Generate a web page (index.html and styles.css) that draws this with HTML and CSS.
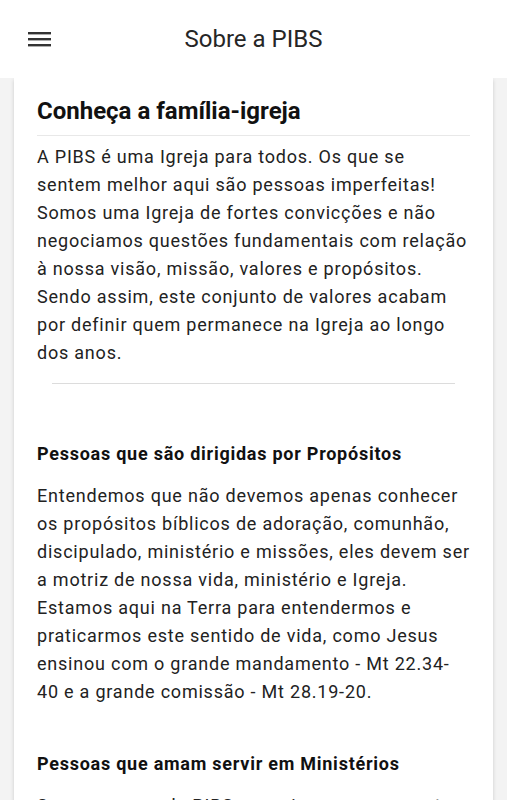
FILE: index.html
```html
<!DOCTYPE html>
<html lang="pt-BR">
<head>
    <meta charset="UTF-8">
    <meta name="viewport" content="width=device-width, initial-scale=1.0">
    <title>Sobre a PIBS</title>
    <link rel="stylesheet" href="styles.css">
</head>
<body>
    <!-- Top bar -->
    <header class="topbar">
        <button class="menu-btn" aria-label="Menu">
            <svg width="24" height="16" viewBox="0 0 24 16">
                <rect x="0" y="0" width="23" height="2.4" fill="#333"/>
                <rect x="0" y="6" width="23" height="2.4" fill="#333"/>
                <rect x="0" y="12" width="23" height="2.4" fill="#333"/>
            </svg>
        </button>
        <h1 class="topbar-title">Sobre a PIBS</h1>
        <span></span>
    </header>

    <!-- Content card -->
    <main class="card">
        <h2 class="card-title">Conheça a família-igreja</h2>
        <p class="intro">A PIBS é uma Igreja para todos. Os que se sentem melhor aqui são pessoas imperfeitas! Somos uma Igreja de fortes convicções e não negociamos questões fundamentais com relação à nossa visão, missão, valores e propósitos. Sendo assim, este conjunto de valores acabam por definir quem permanece na Igreja ao longo dos anos.</p>

        <hr class="divider">

        <section class="topic first">
            <h3>Pessoas que são dirigidas por Propósitos</h3>
            <p>Entendemos que não devemos apenas conhecer os propósitos bíblicos de adoração, comunhão, discipulado, ministério e missões, eles devem ser a motriz de nossa vida, ministério e Igreja. Estamos aqui na Terra para entendermos e praticarmos este sentido de vida, como Jesus ensinou com o grande mandamento - Mt 22.34-40 e a grande comissão - Mt 28.19-20.</p>
        </section>

        <section class="topic">
            <h3>Pessoas que amam servir em Ministérios</h3>
            <p>Somos servos da PIBS e servimos uns aos outros com os dons que Deus nos deu.</p>
        </section>
    </main>
</body>
</html>
```

FILE: styles.css
```css
body {
    margin: 0;
    font-family: Roboto, "Noto Sans", Arial, sans-serif;
    background-color: #f3f3f3; /* light grey page */
    color: #222;
}

/* top bar */
.topbar {
    position: relative;
    z-index: 1;
    height: 78px;
    background-color: #fff;
    display: grid;
    grid-template-columns: 1fr auto 1fr;
    align-items: center;
}
.menu-btn {
    justify-self: start;
    margin-left: 28px;
    padding: 0;
    border: none;
    background: none;
    display: flex;
    margin-top: 1px;
}
.topbar-title {
    margin: 0;
    font-size: 24px;
    font-weight: 400;
    color: #262626;
    line-height: 28px;
}

/* card */
.card {
    margin: 0 14px;
    background-color: #fff;
    padding: 19px 23px 40px;
    box-shadow: 0 2px 4px rgba(0,0,0,0.16);
}
.card-title {
    margin: 0;
    font-size: 24px;
    font-weight: 700;
    line-height: 28px;
    color: #111;
    padding-bottom: 10px;
    border-bottom: 1px solid #e8e8e8;
}
.intro,
.topic p {
    font-size: 18px;
    line-height: 28px;
    letter-spacing: 0.78px;
    color: #222;
}
.intro {
    margin: 7px 0 0;
}
.divider {
    margin: 16px 15px 0;
    border: none;
    border-top: 1px solid #dcdcdc;
}
.topic {
    margin-top: 44px;
}
.topic.first {
    margin-top: 56px;
}
.topic h3 {
    margin: 0;
    font-size: 18px;
    font-weight: 700;
    line-height: 28px;
    letter-spacing: 0.75px;
    color: #111;
}
.topic p {
    margin: 14px 0 0;
}
```
